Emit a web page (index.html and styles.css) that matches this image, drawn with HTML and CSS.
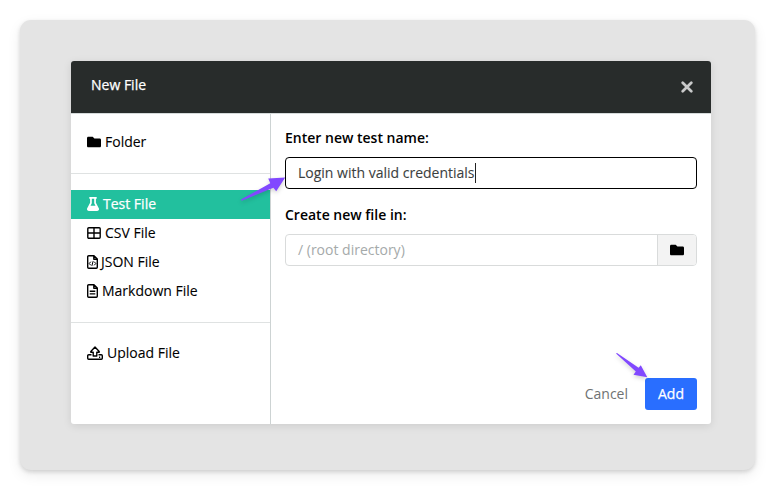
FILE: index.html
```html
<!DOCTYPE html>
<html lang="en">
<head>
<meta charset="utf-8">
<title>New File</title>
<link rel="stylesheet" href="styles.css">
</head>
<body>
<main class="stage">
  <section class="modal">
    <header class="modal-header">
      <h1 class="title">New File</h1>
      <svg class="close" viewBox="0 0 12 12"><path d="M1.7 1.7l8.6 8.6M10.3 1.7l-8.6 8.6"/></svg>
    </header>
    <div class="modal-body">
      <nav class="sidebar">
        <div class="group">
          <div class="item"><svg class="icon w14" viewBox="0 0 512 512"><path d="M464 128H272l-64-64H48C21 64 0 85 0 112v288c0 27 21 48 48 48h416c27 0 48-21 48-48V176c0-27-21-48-48-48z"/></svg><span>Folder</span></div>
        </div>
        <div class="group">
          <div class="item active"><svg class="icon w12" viewBox="0 0 12 14"><path fill-rule="evenodd" d="M2.3 0H9.7V1.7H8.9V5.7L11.8 11.2C12.5 12.6 11.6 14 10.2 14H1.8C.4 14-.5 12.6.2 11.2L3.1 5.7V1.7H2.3ZM4.8 1.7V6.2L3.5 8.7H8.5L7.2 6.2V1.7Z"/></svg><span>Test File</span></div>
          <div class="item"><svg class="icon w14 stroked" viewBox="0 0 14 14"><rect x=".8" y="1.8" width="12.4" height="10.4" rx="1"/><path d="M7 2v10M1 7h12"/></svg><span>CSV File</span></div>
          <div class="item tight"><svg class="icon w11 stroked" viewBox="0 0 11 14"><path d="M7 .7H1.7a1 1 0 0 0-1 1v10.6a1 1 0 0 0 1 1h7.6a1 1 0 0 0 1-1V4ZM6.8 1v3.2H10"/><path class="line" d="M3.8 6.7L2.2 8.5l1.6 1.8M7.2 6.7l1.6 1.8-1.6 1.8M6.1 6.2l-1.2 4.6"/></svg><span>JSON File</span></div>
          <div class="item"><svg class="icon w11 stroked" viewBox="0 0 11 14"><path d="M7 .7H1.7a1 1 0 0 0-1 1v10.6a1 1 0 0 0 1 1h7.6a1 1 0 0 0 1-1V4ZM6.8 1v3.2H10M2.7 7.3h5.6M2.7 9.9h5.6"/></svg><span>Markdown File</span></div>
        </div>
        <div class="group">
          <div class="item"><svg class="icon w16 stroked" viewBox="0 0 16 14"><path d="M8 1L3.8 5.4V6.3H6.2V10H9.8V6.3H12.2V5.4ZM4.5 8.7H1.7a1 1 0 0 0-1 1v2.6a1 1 0 0 0 1 1h12.6a1 1 0 0 0 1-1V9.7a1 1 0 0 0-1-1H11.5M12 11.2h1.2"/></svg><span>Upload File</span></div>
        </div>
      </nav>
      <div class="content">
        <div class="field">
          <div class="label">Enter new test name:</div>
          <div class="input focused"><span>Login with valid credentials</span><i class="caret"></i></div>
        </div>
        <div class="field">
          <div class="label">Create new file in:</div>
          <div class="input picker"><span>/ (root directory)</span><div class="browse"><svg class="icon w14" viewBox="0 0 512 512"><path d="M464 128H272l-64-64H48C21 64 0 85 0 112v288c0 27 21 48 48 48h416c27 0 48-21 48-48V176c0-27-21-48-48-48z"/></svg></div></div>
        </div>
        <footer class="actions">
          <div class="cancel">Cancel</div>
          <div class="add">Add</div>
        </footer>
      </div>
    </div>
  </section>
  <svg class="arrow arrow-input" viewBox="0 0 48 30"><path d="M1 23.6L30.3 7.2 28.2 2.4 45.2 1.5 36.2 15.3 33.4 11.8 1.8 24.7Z"/></svg>
  <svg class="arrow arrow-add" viewBox="0 0 36 30"><path d="M1 1.4L2 .9 23.6 15.8 25.8 13.2 32.3 25.2 18.5 22.7 20.8 19.6Z"/></svg>
</main>
</body>
</html>
```

FILE: styles.css
```css
* { box-sizing: border-box; }
body {
  margin: 0;
  height: 490px;
  padding: 20px;
  overflow: hidden;
  background: #fff;
  font: 14px/20px "Open Sans", sans-serif;
  color: #000;
}
.stage {
  position: relative;
  height: 450px;
  padding: 41px 44px 46px 51px;
  border-radius: 11px;
  background: #e4e4e4;
  box-shadow: 0 2px 4px rgba(0, 0, 0, .14), 0 5px 14px rgba(0, 0, 0, .08);
}
.modal {
  display: flex;
  flex-direction: column;
  height: 363px;
  border-radius: 3px;
  background: #fff;
  box-shadow: 0 2px 8px rgba(0, 0, 0, .1);
  overflow: hidden;
}
.modal-header {
  display: flex;
  justify-content: space-between;
  height: 53px;
  padding: 14px 18px 0 20px;
  border-bottom: 1px solid #d5dada;
  background: #282c2b;
}
.title { margin: 0; font-size: 14px; font-weight: 400; line-height: 20px; color: #fff; -webkit-text-stroke: .25px; }
.close { width: 12px; height: 12px; margin-top: 6px; fill: none; stroke: #c9caca; stroke-width: 2.7; stroke-linecap: round; }
.modal-body { display: flex; flex: 1; }
.sidebar { width: 200px; border-right: 1px solid #cdd3d3; }
.group { padding: 16px 0; border-bottom: 1px solid #dfe2e2; }
.group:first-child { padding: 14px 0 16px; }
.group:last-child { border: 0; }
.item { display: flex; align-items: center; gap: 4px; height: 29px; padding: 0 16px 2px; -webkit-text-stroke: .1px; }
.group:first-child .item { padding-bottom: 1px; }
.item.tight { gap: 3px; }
.item.active { background: #22c09e; color: #fff; -webkit-text-stroke: .25px; }
.icon { flex: none; height: 14px; fill: currentColor; }
.w11 { width: 11px; }
.w12 { width: 12px; }
.w14 { width: 14px; }
.w16 { width: 16px; }
.stroked { fill: none; stroke: currentColor; stroke-width: 1.4; stroke-linejoin: round; }
.line { stroke-width: 1; }
.content { display: flex; flex: 1; flex-direction: column; padding: 14px; }
.field { margin-bottom: 16px; }
.label { margin-bottom: 9px; font-weight: 600; }
.input {
  display: flex;
  align-items: center;
  height: 32px;
  padding-left: 12px;
  border: 1px solid #d9dbdb;
  border-radius: 4px;
  color: #a5aaaa;
}
.focused { border-color: #000; color: #3c3f3f; -webkit-text-stroke: .1px; }
.caret { width: 1px; height: 20px; background: #222; }
.picker { justify-content: space-between; }
.browse {
  display: flex;
  align-items: center;
  justify-content: center;
  width: 39px;
  height: 30px;
  border-left: 1px solid #d9dbdb;
  border-radius: 0 3px 3px 0;
  background: #f3f3f3;
  color: #000;
}
.actions { display: flex; justify-content: flex-end; align-items: center; margin-top: auto; gap: 17px; }
.cancel { color: #6f7272; }
.add { width: 52px; height: 32px; border-radius: 3px; background: #296eff; color: #fff; -webkit-text-stroke: .25px; line-height: 32px; text-align: center; }
.arrow { position: absolute; fill: #8148ff; filter: drop-shadow(0 2px 2px rgba(0, 0, 0, .18)); overflow: visible; }
.arrow-input { left: 220px; top: 156px; width: 48px; height: 30px; }
.arrow-add { left: 595px; top: 332px; width: 36px; height: 30px; }
```
